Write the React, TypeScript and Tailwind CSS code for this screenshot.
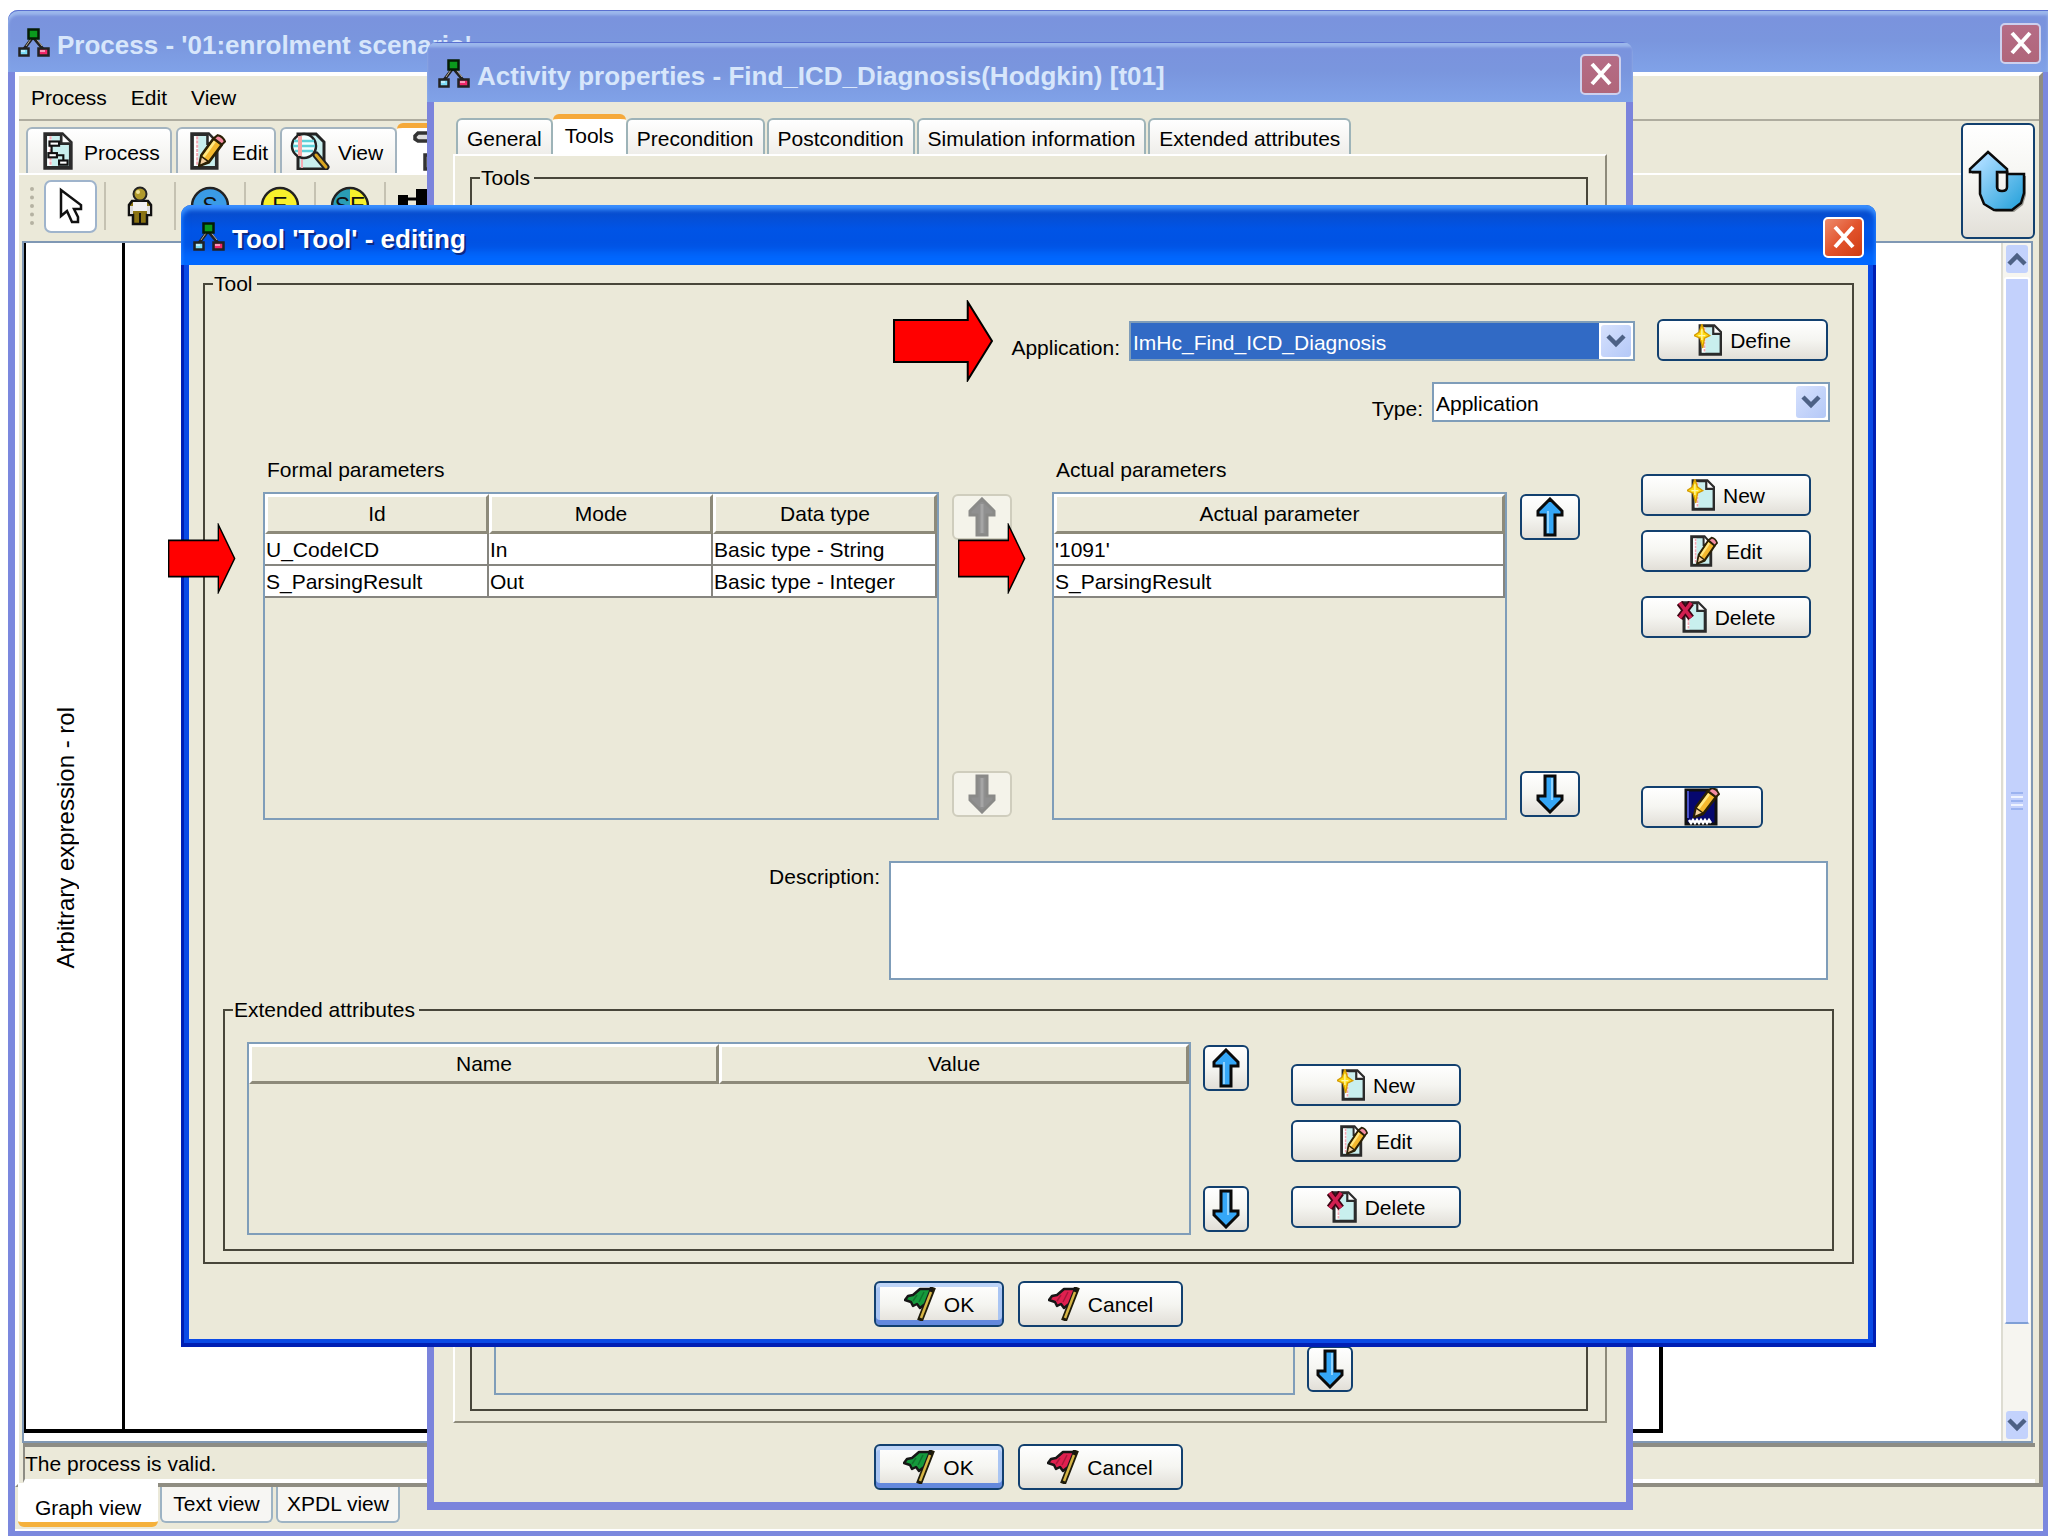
import React from "react";
import { clsx } from "clsx";

const formalParameters = [
  { id: "U_CodeICD", mode: "In", dataType: "Basic type - String" },
  { id: "S_ParsingResult", mode: "Out", dataType: "Basic type - Integer" },
];

const actualParameters = ["'1091'", "S_ParsingResult"];

const activityTabs = ["General", "Tools", "Precondition", "Postcondition", "Simulation information", "Extended attributes"];

/* ---------- icons ---------- */

const TreeIcon = () => (
  <svg width="32" height="30" viewBox="0 0 32 30" className="shrink-0">
    <path d="M15 9 L6 21 M15 9 L25 21" stroke="#222" strokeWidth="3" fill="none" />
    <path d="M15 8 L8 18 M16 8 L24 18" stroke="#b9ac96" strokeWidth="1" fill="none" />
    <rect x="10.500" y="1.500" width="10" height="9" fill="#0b9a1d" stroke="#061c06" strokeWidth="2.500" />
    <rect x="1.500" y="20.500" width="9" height="7" fill="#7ddcf5" stroke="#222" strokeWidth="2.500" />
    <rect x="20.500" y="20.500" width="10" height="7" fill="#f0286a" stroke="#222" strokeWidth="2.500" />
    <path d="M3 23 h4 M22 23 h5" stroke="#fff" strokeWidth="1.500" opacity="0.7" />
  </svg>
);

const page = "M3 2 H19 L27 10 V34 H3 Z";

const Sheet = () => (
  <>
    <path d={page} fill="#c9efee" stroke="#2b2b2b" strokeWidth="3.500" />
    <path d="M5 4 H9 V32 H5 Z" fill="#fff" />
    <path d="M8 4 V32" stroke="#f4a9b4" strokeWidth="2" strokeDasharray="3 1" />
    <path d="M18 2 V11 H27" fill="#fff" stroke="#2b2b2b" strokeWidth="2.500" />
  </>
);

const Pencil = () => (
  <>
    <path d="M10 32 L12 22 L24 6 L32 12 L19 29 Z" fill="#f5b92e" stroke="#2b2005" strokeWidth="2.500" strokeLinejoin="round" />
    <path d="M14 24 L25 9" stroke="#ffe883" strokeWidth="2.500" />
    <path d="M10 32 L12 23 L19 28 Z" fill="#f2cfa0" stroke="#2b2005" strokeWidth="1.500" />
    <path d="M24 6 L28 3 Q33 4 35 9 L32 12 Z" fill="#f58ca2" stroke="#2b2005" strokeWidth="2" />
  </>
);

const EditIcon = ({ className }: { className?: string }) => (
  <svg viewBox="1 0 35 36" preserveAspectRatio="none" className={className}>
    <Sheet />
    <Pencil />
  </svg>
);

const ProcessIcon = () => (
  <svg viewBox="0 0 30 36" preserveAspectRatio="none" className="h-[38px] w-8">
    <Sheet />
    <g fill="#fff" stroke="#111" strokeWidth="2">
      <path d="M9 13 V21 M13 22 H20 V28" fill="none" />
      <rect x="7" y="9" width="9" height="4" />
      <rect x="6" y="20" width="8" height="4" />
      <rect x="16" y="27" width="8" height="4" />
    </g>
  </svg>
);

const ViewIcon = () => (
  <svg viewBox="0 0 40 38" className="h-[38px] w-10">
    <path d="M8 2 H26 L34 10 V37 H8 Z" fill="#c9efee" stroke="#222" strokeWidth="3" />
    <path d="M12 27 V36" stroke="#f4a9b4" strokeWidth="2" />
    <path d="M26 23 L36 35" stroke="#222" strokeWidth="7" strokeLinecap="round" />
    <path d="M26 23 L36 35" stroke="#d9a51f" strokeWidth="3" strokeLinecap="round" />
    <circle cx="14" cy="14" r="12" fill="#f2ffff" stroke="#222" strokeWidth="2.500" />
    <path d="M4 9 H24 M3 14 H25 M5 19 H23" stroke="#5fd0d8" strokeWidth="2.500" />
    <path d="M10 4 V24" stroke="#f7a3a3" strokeWidth="4" />
  </svg>
);

const NewIcon = () => (
  <svg viewBox="0 0 32 36" preserveAspectRatio="none" className="h-8 w-7">
    <g transform="translate(4 0)">
      <Sheet />
    </g>
    <path d="M9 0 L12 9 L18 13 L12 16 L10 27 L7 16 L0 13 L6 9 Z" fill="#ffdc14" stroke="#d59b00" strokeWidth="1.500" />
    <path d="M9 6 V18 M5 13 H13" stroke="#fff8a8" strokeWidth="1.500" />
  </svg>
);

const DeleteIcon = () => (
  <svg viewBox="0 0 34 36" preserveAspectRatio="none" className="h-8 w-[30px]">
    <g transform="translate(5 0)">
      <Sheet />
    </g>
    <path d="M3 2 L16 19 M16 2 L3 19" stroke="#3c0714" strokeWidth="8" />
    <path d="M3 2 L16 19 M16 2 L3 19" stroke="#d21f50" strokeWidth="4" />
  </svg>
);

const NotebookIcon = () => (
  <svg viewBox="0 0 36 38" className="h-[38px] w-9">
    <path d="M2 2 H32 V36 H2 Z" fill="#06086e" stroke="#111" strokeWidth="3" />
    <path d="M4 3 V30" stroke="#4d55c9" strokeWidth="2" />
    <path d="M5 32 L7 35 L9 32 L11 35 L13 32 L15 35 L17 32 L19 35 L21 32 L23 35 L25 32 L27 35" stroke="#fff" strokeWidth="2.500" fill="none" />
    <g transform="translate(0 -3)">
      <Pencil />
    </g>
  </svg>
);

const ArrowIcon = ({ down, disabled }: { down?: boolean; disabled?: boolean }) => (
  <svg viewBox="0 0 28 40" className="h-10 w-7">
    <g transform={down ? "rotate(180 14 20)" : undefined}>
      <path
        d="M14 2 L26 14 V18 H19 V38 H9 V18 H2 V14 Z"
        fill={disabled ? "#909090" : "#35a7f7"}
        stroke={disabled ? "#8a8a88" : "#0a0a0a"}
        strokeWidth="3"
      />
      {!disabled && <path d="M12 14 V36" stroke="#8fd3ff" strokeWidth="2" />}
      {disabled && <path d="M14 7 V36" stroke="#a5a5a5" strokeWidth="3" />}
    </g>
  </svg>
);

const FlagIcon = ({ color }: { color: string }) => (
  <svg viewBox="0 0 32 34" className="h-[34px] w-8">
    <path d="M28 3 L17 31" stroke="#1f1b0a" strokeWidth="6" strokeLinecap="square" />
    <path d="M27 2 L21 17 L16 21 L13 17 L9 19 L7 15 L1 13 L4 9 L9 8 L16 2 Z" fill={color} stroke="#161616" strokeWidth="2.500" strokeLinejoin="round" />
    <path d="M20 5 L15 15 M13 8 L9 14" stroke="#000" strokeWidth="1.500" opacity="0.25" />
    <path d="M27 5 L17 31" stroke="#d6b545" strokeWidth="2.500" />
  </svg>
);

const ChevronIcon = ({ up }: { up?: boolean }) => (
  <svg viewBox="0 0 20 14" className="h-[14px] w-5">
    <path d={up ? "M2 12 L10 4 L18 12" : "M2 2 L10 10 L18 2"} fill="none" stroke="#4d6185" strokeWidth="4.500" />
  </svg>
);

const CursorIcon = () => (
  <svg viewBox="0 0 26 38" className="h-[38px] w-[26px]">
    <path d="M3 3 V29 L9 24 L14 35 H20 V30 L16 22 H23 V18 Z" fill="#fff" stroke="#111" strokeWidth="2.500" />
  </svg>
);

const PersonIcon = () => (
  <svg viewBox="0 0 26 40" className="h-10 w-[26px]">
    <path d="M5 15 H21 L24 19 V29 H20 V38 H6 V29 H2 V19 Z" fill="#8a7312" stroke="#111" strokeWidth="2.500" />
    <path d="M6 16 H20 V25 H6 Z" fill="#f1f1f1" />
    <path d="M3 20 H6 V28 H3 Z M20 20 H23 V28 H20 Z" fill="#dedede" />
    <path d="M13 27 V38" stroke="#111" strokeWidth="2" />
    <circle cx="13" cy="8" r="6.500" fill="#b09a2c" stroke="#222" strokeWidth="2" />
    <circle cx="11" cy="6" r="2" fill="#efe29a" />
  </svg>
);

const BallIcon = ({ left, right, label }: { left: string; right: string; label: string }) => (
  <svg viewBox="0 0 40 40" className="h-10 w-10">
    <path d="M20 2 A18 18 0 0 0 20 38 Z" fill={left} />
    <path d="M20 2 A18 18 0 0 1 20 38 Z" fill={right} />
    <circle cx="20" cy="20" r="18" fill="none" stroke="#222" strokeWidth="2.500" />
    <text x="20" y="28" textAnchor="middle" fontSize="23" fontFamily="Liberation Sans" fill="#111">{label}</text>
  </svg>
);

const backPath = "M20 3 L39 20 V23 H29 V38 Q29 42 34 42 Q39 42 39 38 V25 H56 V44 L53 54 L44 61 H26 L16 55 L12 45 V23 H2 V20 Z";

const BackIcon = () => (
  <svg viewBox="0 0 60 64" className="h-16 w-[60px]">
    <defs>
      <linearGradient id="back" x1="0" y1="0" x2="1" y2="1">
        <stop offset="0.2" stopColor="#a5daff" />
        <stop offset="1" stopColor="#1f9ed8" />
      </linearGradient>
    </defs>
    <path d={backPath} transform="translate(2 2)" fill="#9b9a92" />
    <path d={backPath} fill="url(#back)" stroke="#0a0a0a" strokeWidth="2.500" />
  </svg>
);

const RedArrow = ({ className }: { className: string }) => (
  <svg viewBox="0 0 100 82" preserveAspectRatio="none" className={clsx("pointer-events-none absolute", className)}>
    <path d="M1 20 H74 V2 L98 41 L74 80 V62 H1 Z" fill="#ff0000" stroke="#000" strokeWidth="2" />
  </svg>
);

/* ---------- controls ---------- */

const XpButton = ({
  children,
  className,
  primary,
  disabled,
  label,
}: {
  children: React.ReactNode;
  className?: string;
  primary?: boolean;
  disabled?: boolean;
  label?: string;
}) => (
  <button
    type="button"
    disabled={disabled}
    aria-label={label}
    className={clsx(
      "flex shrink-0 items-center justify-center gap-2 rounded-[6px] border-2",
      disabled ? "border-[#cfcdbd] bg-[#f4f3ea]" : "border-[#12406f] bg-linear-to-b from-white via-[#f5f5f1] to-[#e2dfd8]",
      primary && "shadow-[inset_0_4px_#bdd4f8,inset_0_-5px_#6489dd,inset_4px_0_#a9c5f3,inset_-4px_0_#a9c5f3]",
      className
    )}
  >
    {children}
  </button>
);

const CloseButton = ({ active }: { active?: boolean }) => (
  <button
    type="button"
    aria-label="Close"
    className={clsx(
      "flex size-[41px] shrink-0 items-center justify-center rounded-[5px] border-2",
      active ? "border-white bg-linear-to-br from-[#ec8a6b] via-[#e2532b] to-[#cf3c12]" : "border-[#ccd0ee] bg-linear-to-b from-[#b56c86] to-[#b0667a]"
    )}
  >
    <svg viewBox="0 0 24 24" className="size-6">
      <path d="M3 2 L21 22 M21 2 L3 22" stroke="#fff" strokeWidth="4" />
    </svg>
  </button>
);

const TitleBar = ({ title, active, className }: { title: string; active?: boolean; className?: string }) => (
  <header
    className={clsx(
      "flex shrink-0 items-center pt-1",
      active
        ? "bg-linear-to-b from-[#0a49c4] via-[#0054e6] via-40% to-[#0050e0] text-white shadow-[inset_0_5px_4px_#3a90ff,inset_0_-14px_10px_#0068ff]"
        : "bg-linear-to-b from-[#7a92dd] via-[#7a96de] via-50% to-[#80a2e8] text-[#d7e6fb] shadow-[inset_0_1px_#5a70d0,inset_0_5px_3px_#9cb8ec]",
      className
    )}
  >
    <TreeIcon />
    <h2
      className={clsx(
        "ml-[7px] flex-1 pt-1 text-[26px] leading-[32px] font-bold whitespace-nowrap",
        active && "[text-shadow:2px_2px_#0a2a86]"
      )}
    >
      {title}
    </h2>
    <CloseButton active={active} />
  </header>
);

const HeaderCell = ({ children }: { children: React.ReactNode }) => (
  <th
    scope="col"
    className="h-10 border-[3px] border-t-white border-r-[#8d8a7a] border-b-[#8d8a7a] border-l-white p-0 font-normal"
  >
    {children}
  </th>
);

const cell = "h-8 border-r-2 border-b-2 border-[#86857f] bg-white p-0 pt-0.5 pl-px whitespace-nowrap";

const Combo = ({ id, value, selected, className }: { id: string; value: string; selected?: boolean; className?: string }) => (
  <div className={clsx("flex h-10 border-2 border-[#7f9db9] bg-white", className)}>
    <select
      id={id}
      defaultValue={value}
      className={clsx("min-w-0 flex-1 appearance-none pt-1 pl-0.5 outline-none", selected ? "bg-[#316ac5] text-white" : "bg-white")}
    >
      <option>{value}</option>
    </select>
    <span className="m-0.5 flex w-[30px] items-center justify-center rounded-[3px] bg-linear-to-br from-[#d6e1fd] to-[#b4c8f7]">
      <ChevronIcon />
    </span>
  </div>
);

const OkCancel = ({ className }: { className?: string }) => (
  <footer className={clsx("flex justify-center gap-[14px]", className)}>
    <XpButton primary className="h-[46px] w-[130px]">
      <FlagIcon color="#159a3c" />
      <span className="pt-0.5">OK</span>
    </XpButton>
    <XpButton className="h-[46px] w-[165px]">
      <FlagIcon color="#e0204f" />
      <span className="pt-0.5">Cancel</span>
    </XpButton>
  </footer>
);

const RecordButtons = ({ className }: { className?: string }) => (
  <div className={clsx("flex w-[170px] shrink-0 flex-col", className)}>
    <XpButton className="h-[42px]">
      <NewIcon />
      <span className="pt-0.5">New</span>
    </XpButton>
    <XpButton className="mt-[14px] h-[42px]">
      <EditIcon className="h-8 w-7" />
      <span className="pt-0.5">Edit</span>
    </XpButton>
    <XpButton className="mt-6 h-[42px]">
      <DeleteIcon />
      <span className="pt-0.5">Delete</span>
    </XpButton>
  </div>
);

const MoveButtons = ({ className, size, disabled }: { className?: string; size: string; disabled?: boolean }) => (
  <div className={clsx("flex shrink-0 flex-col justify-between", className)}>
    <XpButton className={size} disabled={disabled} label="Move up">
      <ArrowIcon disabled={disabled} />
    </XpButton>
    <XpButton className={size} disabled={disabled} label="Move down">
      <ArrowIcon down disabled={disabled} />
    </XpButton>
  </div>
);

/* ---------- windows ---------- */

const toolTab = "flex items-center rounded-t-[6px] border-2 border-b-0 border-[#a3b4c0] bg-linear-to-b from-white to-[#efeeea]";
const toolSlot = "flex h-12 w-[70px] items-center justify-center border-l-2 border-[#c5c2b2]";

const ProcessWindow = () => (
  <section className="ml-2 flex min-h-screen flex-col pt-[10px]">
    <TitleBar title="Process - '01:enrolment scenario'" className="h-[62px] rounded-tl-[10px] pr-[7px] pl-[10px]" />
    <div className="flex flex-1 flex-col border-r-[5px] border-b-[5px] border-l-[7px] border-[#7b88de] bg-[#ebe9d9]">
      <div className="flex flex-1 flex-col border-4 border-t-white border-r-[#8f8d82] border-b-[#8f8d82] border-l-white">
        <nav className="flex h-[45px] items-center gap-6 border-b-2 border-[#aeac9f] pl-3">
          <button type="button">Process</button>
          <button type="button">Edit</button>
          <button type="button">View</button>
        </nav>
        <div className="flex pr-1">
          <div className="min-w-0 flex-1 overflow-hidden">
            <div className="flex h-[54px] items-end gap-1 border-b-2 border-white pl-[7px]">
              <button type="button" className={clsx(toolTab, "h-[46px] w-[146px] gap-2.5 pl-[14px]")}>
                <ProcessIcon />
                <span className="pt-1">Process</span>
              </button>
              <button type="button" className={clsx(toolTab, "h-[46px] w-[100px] gap-1.5 pl-3")}>
                <EditIcon className="h-[38px] w-9" />
                <span className="pt-1">Edit</span>
              </button>
              <button type="button" className={clsx(toolTab, "h-[46px] w-[117px] gap-2 pl-2")}>
                <ViewIcon />
                <span className="pt-1">View</span>
              </button>
              <button type="button" aria-label="Graph" className="-ml-1 h-[50px] w-20 rounded-t-[6px] border-t-[5px] border-[#f5a93a] bg-white pl-4">
                <svg viewBox="0 0 36 40" className="h-10 w-9">
                  <path d="M2 5 L5 2 H16 V10 H5 L2 8 Z M12 24 H26 V38 H12 Z" fill="#ddd" stroke="#333" strokeWidth="3.500" />
                </svg>
              </button>
            </div>
            <div className="flex h-[66px] items-center pb-1 pl-[11px]">
              <div className="my-3 mr-[10px] w-1 self-stretch border-l-4 border-dotted border-[#b5b2a2]" />
              <button type="button" aria-label="Select" className="mr-[7px] flex size-[53px] items-center justify-center rounded-[7px] border-2 border-[#9fb4cc] bg-white">
                <CursorIcon />
              </button>
              <div className={toolSlot}><PersonIcon /></div>
              <div className={toolSlot}><BallIcon left="#3a9be6" right="#3a9be6" label="S" /></div>
              <div className={toolSlot}><BallIcon left="#f8f02c" right="#f8f02c" label="E" /></div>
              <div className={toolSlot}><BallIcon left="#2a9db5" right="#f8f02c" label="SE" /></div>
              <div className={toolSlot}>
                <svg viewBox="0 0 44 34" className="h-[34px] w-11">
                  <path d="M0 6 H10 V28 H0 Z M18 0 H44 V34 H18 Z" fill="#000" />
                  <path d="M10 10 H18" stroke="#000" strokeWidth="3" />
                </svg>
              </div>
            </div>
          </div>
          <XpButton label="Back" className="mt-[2px] h-[116px] w-[74px]">
            <BackIcon />
          </XpButton>
        </div>
        <div className="mr-1.5 ml-[3px] flex flex-1 border-2 border-[#8098b4] bg-white">
          <div className="mr-[338px] mb-2 flex flex-1 border-r-4 border-b-4 border-black">
            <div className="flex w-[101px] items-center justify-center border-r-[3px] border-l-2 border-black pr-4">
              <span className="rotate-180 pb-1 text-[24px] [writing-mode:vertical-rl]">Arbitrary expression - rol</span>
            </div>
          </div>
          <div className="flex w-[30px] flex-col border-l-2 border-[#dddcd2] bg-[#f6f5f0] px-px">
            <button type="button" aria-label="Scroll up" className="m-0.5 flex h-7 items-center justify-center rounded-[3px] bg-[#c3d2fc]">
              <ChevronIcon up />
            </button>
            <div className="mt-0.5 mb-[85px] flex flex-1 flex-col items-center justify-center gap-[2px] rounded-[3px] border-2 border-white border-b-[#7f9fd6] bg-[#c3d1fc]">
              <span className="h-0.5 w-3 bg-[#9bb3f0]" />
              <span className="h-0.5 w-3 bg-[#eef3ff]" />
              <span className="h-0.5 w-3 bg-[#9bb3f0]" />
              <span className="h-0.5 w-3 bg-[#eef3ff]" />
              <span className="h-0.5 w-3 bg-[#9bb3f0]" />
            </div>
            <button type="button" aria-label="Scroll down" className="m-0.5 flex h-7 items-center justify-center rounded-[3px] bg-[#c3d2fc]">
              <ChevronIcon />
            </button>
          </div>
        </div>
        <p className="mr-1 ml-1 h-10 border-t-4 border-b-4 border-l-2 border-t-[#8d8c84] border-b-white border-l-[#8d8c84] leading-[34px]">
          The process is valid.
        </p>
      </div>
      <div className="flex h-[44px] items-start border-b-2 border-white pl-[3px]">
        <button type="button" className="-mt-1 h-[44px] w-[140px] rounded-b-[6px] border-b-[5px] border-[#f5b13c] bg-white pt-2.5">Graph view</button>
        <button type="button" className="ml-0.5 h-9 w-[113px] rounded-b-[6px] border-2 border-t-0 border-[#9db3c4] bg-[#f7f6f3]">Text view</button>
        <button type="button" className="ml-[3px] h-9 w-[124px] rounded-b-[6px] border-2 border-t-0 border-[#9db3c4] bg-[#f7f6f3]">XPDL view</button>
      </div>
    </div>
  </section>
);

const ActivityWindow = () => (
  <section className="absolute top-[42px] right-[415px] bottom-[26px] left-[427px] flex flex-col overflow-hidden rounded-t-[10px]">
    <TitleBar title="Activity properties - Find_ICD_Diagnosis(Hodgkin) [t01]" className="h-[60px] pr-3 pl-[11px]" />
    <div className="flex flex-1 flex-col border-x-[7px] border-b-8 border-[#7b84dc] bg-[#ebe9d9] px-[19px] pt-3">
      <div className="flex h-10 items-end pl-[3px]">
        {activityTabs.map((tab) => (
          <button
            key={tab}
            type="button"
            className={clsx(
              "rounded-t-[6px] whitespace-nowrap",
              tab === "Tools"
                ? "h-10 border-t-[5px] border-[#f5a93a] bg-white px-3 pb-0.5"
                : "h-9 border-2 border-b-0 border-[#9db3b8] bg-linear-to-b from-white to-[#efeeea] px-[9px] pt-1",
              tab !== "General" && tab !== "Tools" && "mr-0.5"
            )}
          >
            {tab}
          </button>
        ))}
      </div>
      <div className="flex flex-1 flex-col border-2 border-t-white border-r-[#8d8a7a] border-b-[#8d8a7a] border-l-white pt-[9px] pr-[17px] pb-2.5 pl-[15px]">
        <fieldset className="flex flex-1 flex-col border-2 border-[#48463a]">
          <legend className="ml-2 pr-1 pl-px">Tools</legend>
          <div className="mt-4 mr-[233px] mb-[14px] ml-[22px] flex flex-1 gap-3">
            <div className="flex-1 border-2 border-[#7f9db9]" />
            <MoveButtons size="h-[46px] w-[46px]" className="py-[3px]" />
          </div>
        </fieldset>
      </div>
      <OkCancel className="pt-[21px] pr-1 pb-3" />
    </div>
  </section>
);

const ToolDialog = () => (
  <section className="absolute top-[205px] right-[172px] left-[181px] rounded-t-[10px]">
    <TitleBar active title="Tool 'Tool' - editing" className="h-[60px] rounded-t-[10px] pr-3 pl-3" />
    <div className="border-x-[3px] border-b-4 border-[#001fb4]">
      <div className="border-x-[5px] border-b-4 border-[#0a4ae6] bg-[#ebe9d9] px-[14px] pt-1.5">
        <fieldset className="border-2 border-[#48463a] pb-[11px]">
          <legend className="ml-2 pr-1 pl-px">Tool</legend>

          <div className="mt-[22px] flex items-end justify-end pr-6">
            <label htmlFor="application">Application:</label>
            <Combo id="application" value="ImHc_Find_ICD_Diagnosis" selected className="ml-[9px] w-[506px]" />
            <XpButton className="ml-[22px] h-[42px] w-[171px]">
              <NewIcon />
              <span className="pt-0.5">Define</span>
            </XpButton>
          </div>
          <div className="mt-[21px] flex items-end justify-end pr-[22px]">
            <label htmlFor="type">Type:</label>
            <Combo id="type" value="Application" className="ml-[9px] w-[398px]" />
          </div>

          <div className="mt-[35px] flex pr-[41px] pl-[58px]">
            <div className="mb-2 flex-[676]">
              <h3 className="pl-1">Formal parameters</h3>
              <div className="mt-[9px] h-[328px] border-2 border-[#7f9db9]">
                <table className="w-full table-fixed border-separate border-spacing-0 text-left">
                  <thead className="text-center">
                    <tr>
                      <HeaderCell>Id</HeaderCell>
                      <HeaderCell>Mode</HeaderCell>
                      <HeaderCell>Data type</HeaderCell>
                    </tr>
                  </thead>
                  <tbody>
                    {formalParameters.map((p) => (
                      <tr key={p.id}>
                        <td className={cell}>{p.id}</td>
                        <td className={cell}>{p.mode}</td>
                        <td className={cell}>{p.dataType}</td>
                      </tr>
                    ))}
                  </tbody>
                </table>
              </div>
            </div>
            <MoveButtons disabled size="h-[46px] w-[60px]" className="ml-[13px] pt-[37px] pb-[11px]" />
            <div className="mb-2 ml-10 flex-[455]">
              <h3 className="pl-1">Actual parameters</h3>
              <div className="mt-[9px] h-[328px] border-2 border-[#7f9db9]">
                <table className="w-full table-fixed border-separate border-spacing-0 text-left">
                  <thead className="text-center">
                    <tr>
                      <HeaderCell>Actual parameter</HeaderCell>
                    </tr>
                  </thead>
                  <tbody>
                    {actualParameters.map((p) => (
                      <tr key={p}>
                        <td className={cell}>{p}</td>
                      </tr>
                    ))}
                  </tbody>
                </table>
              </div>
            </div>
            <MoveButtons size="h-[46px] w-[60px]" className="ml-[13px] pt-[37px] pb-[11px]" />
            <div className="ml-[61px] flex flex-col justify-between pt-[17px]">
              <RecordButtons />
              <XpButton className="h-[42px] w-[122px]" label="Edit expression">
                <NotebookIcon />
              </XpButton>
            </div>
          </div>

          <div className="mt-[33px] flex items-start justify-end pr-6">
            <label htmlFor="description" className="pt-[3px]">Description:</label>
            <textarea id="description" className="ml-[9px] h-[119px] w-[939px] resize-none border-2 border-[#7f9db9] bg-white outline-none" />
          </div>

          <fieldset className="mx-[18px] mt-[17px] border-2 border-[#48463a] pb-[14px]">
            <legend className="ml-2 pr-1 pl-px">Extended attributes</legend>
            <div className="mt-[19px] flex pr-[371px] pl-[22px]">
              <div className="h-[193px] flex-1 border-2 border-[#7f9db9]">
                <table className="w-full table-fixed border-separate border-spacing-0">
                  <thead>
                    <tr>
                      <HeaderCell>Name</HeaderCell>
                      <HeaderCell>Value</HeaderCell>
                    </tr>
                  </thead>
                </table>
              </div>
              <MoveButtons size="h-[46px] w-[46px]" className="ml-3 py-[3px]" />
              <RecordButtons className="ml-[42px] pt-[22px]" />
            </div>
          </fieldset>
        </fieldset>
        <OkCancel className="pt-[17px] pb-3" />
      </div>
    </div>

    <RedArrow className="top-[95px] left-[712px] h-[82px] w-[101px]" />
    <RedArrow className="top-[318px] left-[-13px] h-[71px] w-[68px]" />
    <RedArrow className="top-[318px] left-[777px] h-[71px] w-[68px]" />
  </section>
);

const App: React.FC = () => {
  return (
    <main className="relative min-h-screen overflow-hidden bg-white font-['Liberation_Sans',Arial,sans-serif] text-[21px] leading-[26px] text-black">
      <ProcessWindow />
      <ActivityWindow />
      <ToolDialog />
    </main>
  );
};

export default App;
